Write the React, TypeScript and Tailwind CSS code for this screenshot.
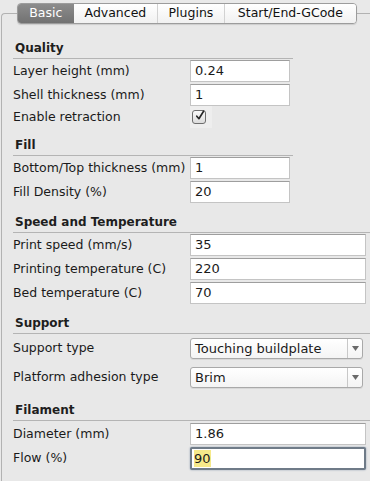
import React from 'react';

const tabs = [
  { label: 'Basic', w: 'w-[56px]', active: true },
  { label: 'Advanced', w: 'w-[84px]', active: false },
  { label: 'Plugins', w: 'w-[67px]', active: false },
  { label: 'Start/End-GCode', w: 'w-[133px]', active: false },
];

function Header({ title, first }: { title: string; first?: boolean }) {
  return (
    <div
      className={`${first ? 'mt-[16px]' : 'mt-[10px]'} border-b border-[#b4b4b4] pb-[2px] pl-[2px] text-[12px] font-bold leading-[16px] text-[#1e1e1e]`}
    >
      {title}
    </div>
  );
}

function TextRow({ label, value, wide, focused }: { label: string; value: string; wide?: boolean; focused?: boolean }) {
  return (
    <div className="flex h-[24px] items-center">
      <div className="w-[177px] shrink-0 text-[12.5px] text-[#1a1a1a]">{label}</div>
      {focused ? (
        <div className="flex h-[23px] w-[176px] items-center rounded-[2px] border-2 border-[#6f7b88] bg-white pl-[2px] text-[13px] text-[#1a1a1a] shadow-[0_0_2px_#8c9bb0]">
          <span className="bg-[#f6e98a] leading-[17px]">{value}</span>
        </div>
      ) : (
        <div
          className={`flex h-[22px] items-center border border-[#c4c4c4] border-t-[#9e9e9e] bg-white pl-[4px] text-[13px] text-[#1a1a1a] ${
            wide ? 'w-[176px]' : 'w-[100px]'
          }`}
        >
          {value}
        </div>
      )}
    </div>
  );
}

function SelectRow({ label, value }: { label: string; value: string }) {
  return (
    <div className="flex h-[29px] items-center">
      <div className="w-[177px] shrink-0 text-[12.5px] text-[#1a1a1a]">{label}</div>
      <div className="flex h-[21px] w-[173px] items-center rounded-[3px] border border-[#a9a9a9] bg-gradient-to-b from-white to-[#f4f4f4] shadow-[0_1px_0_#d8d8d8]">
        <div className="flex-1 pl-[4px] text-[13px] text-[#1a1a1a]">{value}</div>
        <div className="flex h-full w-[15px] items-center justify-center border-l border-[#c8c8c8]">
          <svg width="7" height="5" viewBox="0 0 7 5">
            <path d="M0 0 L7 0 L3.5 5 Z" fill="#6a6a6a" />
          </svg>
        </div>
      </div>
    </div>
  );
}

export default function App() {
  return (
    <div
      className="relative h-[481px] w-[370px] overflow-hidden bg-[#e9e9e9] pt-[13px]"
      style={{ fontFamily: '"DejaVu Sans", "Liberation Sans", sans-serif' }}
    >
      <div className="ml-[1px] h-full rounded-tl-[4px] border-l border-t border-[#b2b2b2] bg-[#e8e8e8]">
        {/* tab strip sits on the frame line */}
        <div className="relative z-10 -mt-[11px] ml-[15px] flex h-[21px] w-[340px] overflow-hidden rounded-[4px] border border-[#9c9c9c] shadow-[0_1px_1px_rgba(0,0,0,0.12)]">
          {tabs.map((t, i) => (
            <div
              key={t.label}
              className={`flex h-full items-center justify-center text-[12.5px] ${t.w} ${
                t.active
                  ? 'bg-gradient-to-b from-[#8c8c8c] to-[#727272] text-white'
                  : 'bg-gradient-to-b from-white to-[#f1f1f1] text-[#111]'
              } ${i > 1 ? 'border-l border-[#d2d2d2]' : ''}`}
            >
              {t.label}
            </div>
          ))}
        </div>

        <div className="pl-[11px]">
          <div className="w-[280px]">
            <Header title="Quality" first />
            <TextRow label="Layer height (mm)" value="0.24" />
            <TextRow label="Shell thickness (mm)" value="1" />
            <div className="flex h-[20px] items-center">
              <div className="w-[177px] shrink-0 text-[12.5px] text-[#1a1a1a]">Enable retraction</div>
              <div className="flex h-[22px] w-[22px] items-center bg-[#eeeeee] pl-[2px]">
                <div className="flex h-[14px] w-[14px] items-center justify-center rounded-[3px] border border-[#6e6e6e] bg-gradient-to-b from-[#fafafa] to-[#dcdcdc]">
                  <svg width="14" height="15" viewBox="0 0 14 15" className="-mt-[4px] ml-[2px]">
                    <path d="M2.5 8.5 L5.5 12 L12 1.5" fill="none" stroke="#262626" strokeWidth="2.3" strokeLinecap="round" strokeLinejoin="round" />
                  </svg>
                </div>
              </div>
            </div>

            <Header title="Fill" />
            <TextRow label="Bottom/Top thickness (mm)" value="1" />
            <TextRow label="Fill Density (%)" value="20" />
          </div>

          <Header title="Speed and Temperature" />
          <TextRow label="Print speed (mm/s)" value="35" wide />
          <TextRow label="Printing temperature (C)" value="220" wide />
          <TextRow label="Bed temperature (C)" value="70" wide />

          <Header title="Support" />
          <SelectRow label="Support type" value="Touching buildplate" />
          <SelectRow label="Platform adhesion type" value="Brim" />

          <Header title="Filament" />
          <div className="mt-[1px]">
            <TextRow label="Diameter (mm)" value="1.86" wide />
            <TextRow label="Flow (%)" value="90" wide focused />
          </div>
        </div>
      </div>
    </div>
  );
}
